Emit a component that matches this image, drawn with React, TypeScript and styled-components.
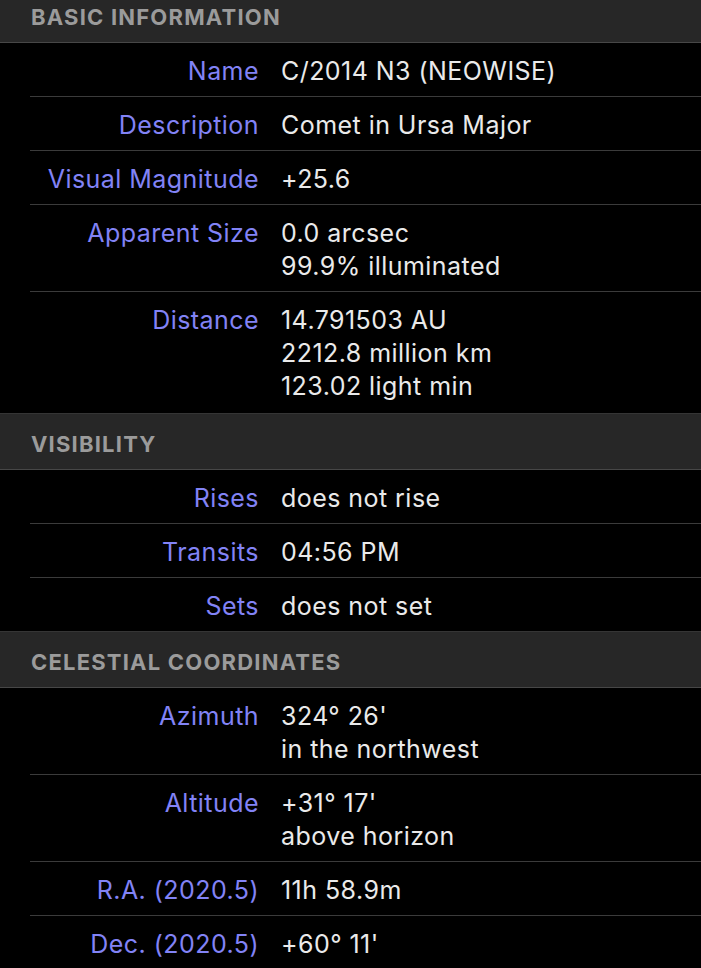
import React from "react";
import styled, { createGlobalStyle } from "styled-components";

const Global = createGlobalStyle`
  html, body { margin: 0; padding: 0; background: #000; }
  body { font-family: Inter, "Liberation Sans", sans-serif; -webkit-font-smoothing: antialiased; }
`;

const Page = styled.div`
  width: 701px;
  height: 968px;
  overflow: hidden;
  background: #000;
`;

const Scroller = styled.div`
  margin-top: -14px;
  display: flex;
  flex-direction: column;
`;

const SectionHeader = styled.div`
  display: flex;
  align-items: center;
  padding-left: 31px;
  padding-top: 4px;
  box-sizing: border-box;
  height: 57px;
  background: #272727;
  border-top: 1px solid #353535;
  border-bottom: 1px solid #474747;
  color: #9b9b9b;
  font-size: 22px;
  font-weight: 700;
  letter-spacing: 1.2px;
`;

const Rows = styled.div`
  padding-left: 30px;
  display: flex;
  flex-direction: column;
`;

const Row = styled.div<{ $last?: boolean; $extra?: number }>`
  display: grid;
  grid-template-columns: 229px 1fr;
  column-gap: 22px;
  padding: 12px 0 ${(p) => 8 + (p.$extra ?? 0)}px;
  border-bottom: ${(p) => (p.$last ? "none" : "1px solid #3b3b3b")};
  font-size: 25px;
  line-height: 33px;
  letter-spacing: 0.45px;
`;

const Label = styled.div`
  text-align: right;
  color: #8283f6;
  white-space: nowrap;
`;

const Value = styled.div`
  color: #eaeaea;
  white-space: nowrap;
`;

type Item = { label: string; lines: string[]; extra?: number };
type Section = { title: string; items: Item[] };

const sections: Section[] = [
  {
    title: "BASIC INFORMATION",
    items: [
      { label: "Name", lines: ["C/2014 N3 (NEOWISE)"] },
      { label: "Description", lines: ["Comet in Ursa Major"] },
      { label: "Visual Magnitude", lines: ["+25.6"] },
      { label: "Apparent Size", lines: ["0.0 arcsec", "99.9% illuminated"] },
      {
        label: "Distance",
        lines: ["14.791503 AU", "2212.8 million km", "123.02 light min"],
        extra: 2,
      },
    ],
  },
  {
    title: "VISIBILITY",
    items: [
      { label: "Rises", lines: ["does not rise"] },
      { label: "Transits", lines: ["04:56 PM"] },
      { label: "Sets", lines: ["does not set"] },
    ],
  },
  {
    title: "CELESTIAL COORDINATES",
    items: [
      { label: "Azimuth", lines: ["324° 26'", "in the northwest"] },
      { label: "Altitude", lines: ["+31° 17'", "above horizon"] },
      { label: "R.A. (2020.5)", lines: ["11h 58.9m"] },
      { label: "Dec. (2020.5)", lines: ["+60° 11'"] },
    ],
  },
];

export default function App() {
  return (
    <Page>
      <Global />
      <Scroller>
        {sections.map((s) => (
          <React.Fragment key={s.title}>
            <SectionHeader>{s.title}</SectionHeader>
            <Rows>
              {s.items.map((it, i) => (
                <Row key={it.label} $last={i === s.items.length - 1} $extra={it.extra}>
                  <Label>{it.label}</Label>
                  <Value>
                    {it.lines.map((l) => (
                      <div key={l}>{l}</div>
                    ))}
                  </Value>
                </Row>
              ))}
            </Rows>
          </React.Fragment>
        ))}
      </Scroller>
    </Page>
  );
}
